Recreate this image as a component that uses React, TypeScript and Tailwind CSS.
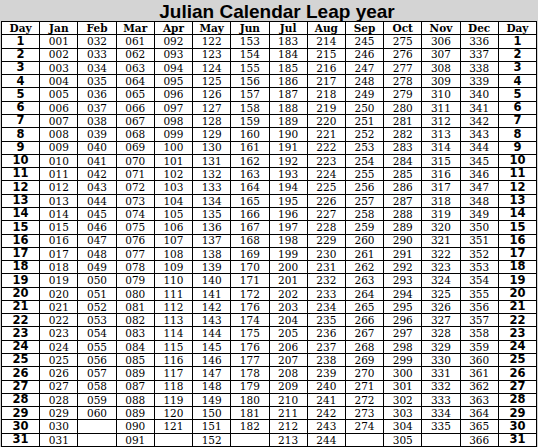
import React from "react";

const months = [
  { name: "Jan", off: 0, days: 31 },
  { name: "Feb", off: 31, days: 29 },
  { name: "Mar", off: 60, days: 31 },
  { name: "Apr", off: 91, days: 30 },
  { name: "May", off: 121, days: 31 },
  { name: "Jun", off: 152, days: 30 },
  { name: "Jul", off: 182, days: 31 },
  { name: "Aug", off: 213, days: 31 },
  { name: "Sep", off: 244, days: 30 },
  { name: "Oct", off: 274, days: 31 },
  { name: "Nov", off: 305, days: 30 },
  { name: "Dec", off: 335, days: 31 },
];

const overrides: Record<string, string> = {
  "Mar-26": "089",
  "Jun-21": "176",
};

function val(mi: number, d: number): string {
  const m = months[mi];
  if (d > m.days) return "";
  const k = `${m.name}-${d}`;
  if (overrides[k]) return overrides[k];
  return String(m.off + d).padStart(3, "0");
}

const headCls =
  "border-r border-b border-black flex items-center justify-center text-[10.5px] font-bold leading-none font-['DejaVu_Serif',serif]";
const dayCls =
  "border-r border-b border-black flex items-center justify-center text-[11.5px] font-bold leading-none font-['DejaVu_Sans',sans-serif]";
const valCls =
  "border-r border-b border-black flex items-center justify-center text-[10.5px] leading-none font-['DejaVu_Serif',serif]";

export default function App() {
  const days = Array.from({ length: 31 }, (_, i) => i + 1);
  return (
    <div className="w-[538px] h-[447px] bg-[#d4d4d4] overflow-hidden">
      <div className="h-[21px] flex items-center justify-center pl-[16px] pt-[1px] text-[19px] font-bold leading-none text-black font-['Liberation_Sans',Arial,sans-serif]">
        Julian Calendar Leap year
      </div>
      <div className="ml-[1px] w-[536px] h-[426px] bg-white border-l border-t border-black grid grid-cols-14 grid-rows-[repeat(32,minmax(0,1fr))] text-black">
        <div className={headCls}>Day</div>
        {months.map((m) => (
          <div key={m.name} className={headCls}>
            {m.name}
          </div>
        ))}
        <div className={headCls}>Day</div>
        {days.map((d) => (
          <React.Fragment key={d}>
            <div className={dayCls}>{d}</div>
            {months.map((m, mi) => (
              <div key={m.name} className={valCls}>
                {val(mi, d)}
              </div>
            ))}
            <div className={dayCls}>{d}</div>
          </React.Fragment>
        ))}
      </div>
    </div>
  );
}
